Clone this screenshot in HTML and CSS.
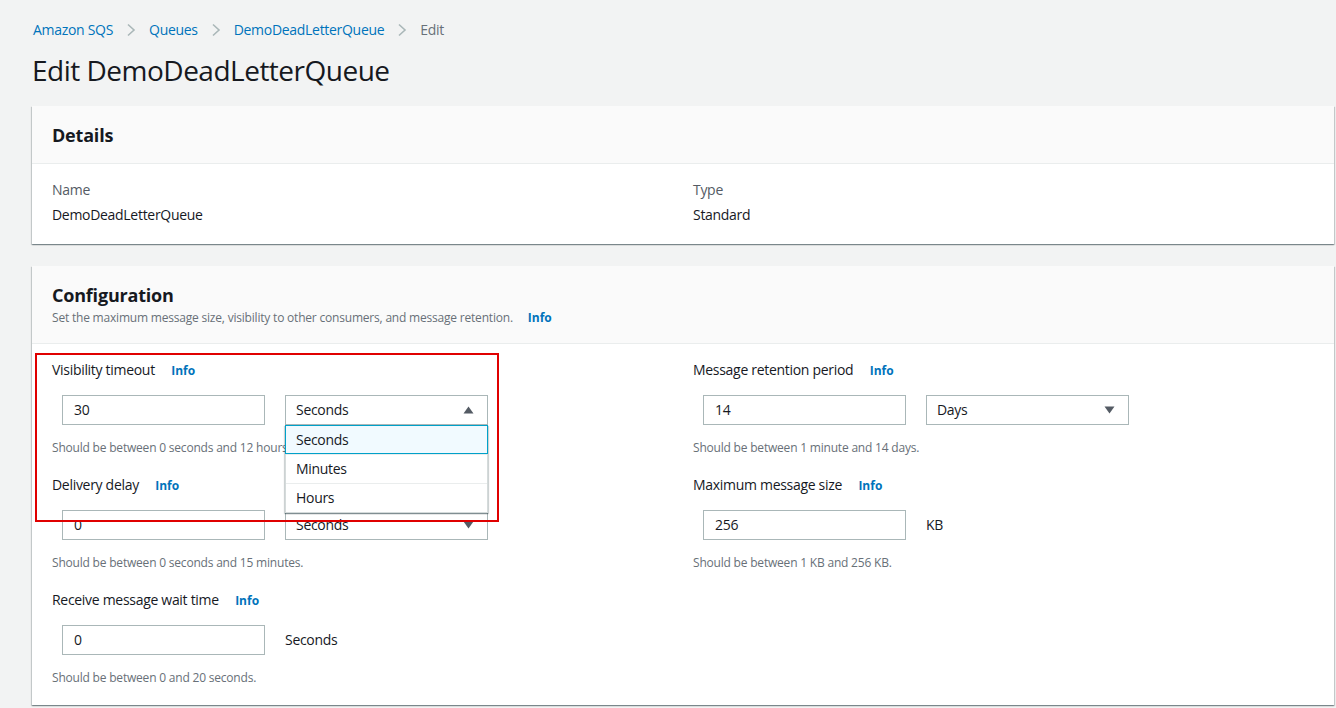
FILE: index.html
```html
<!DOCTYPE html>
<html lang="en">
<head>
<meta charset="utf-8">
<title>Edit DemoDeadLetterQueue</title>
<link rel="stylesheet" href="styles.css">
</head>
<body>
<div class="page">
  <nav class="crumbs">
    <a class="crumb-link">Amazon SQS</a>
    <svg class="chev" width="10" height="14" viewBox="0 0 10 14"><path d="M2 1.5 L8 7 L2 12.5" fill="none" stroke="#aab7b8" stroke-width="1.6"/></svg>
    <a class="crumb-link">Queues</a>
    <svg class="chev" width="10" height="14" viewBox="0 0 10 14"><path d="M2 1.5 L8 7 L2 12.5" fill="none" stroke="#aab7b8" stroke-width="1.6"/></svg>
    <a class="crumb-link">DemoDeadLetterQueue</a>
    <svg class="chev" width="10" height="14" viewBox="0 0 10 14"><path d="M2 1.5 L8 7 L2 12.5" fill="none" stroke="#aab7b8" stroke-width="1.6"/></svg>
    <span class="crumb-current">Edit</span>
  </nav>
  <h1 class="title">Edit DemoDeadLetterQueue</h1>

  <section class="panel">
    <header class="panel-head">
      <h2 class="panel-title">Details</h2>
    </header>
    <div class="panel-body details-body">
      <div class="kv">
        <div class="kv-label">Name</div>
        <div class="kv-value">DemoDeadLetterQueue</div>
      </div>
      <div class="kv">
        <div class="kv-label">Type</div>
        <div class="kv-value">Standard</div>
      </div>
    </div>
  </section>

  <section class="panel config">
    <header class="panel-head config-head">
      <h2 class="panel-title">Configuration</h2>
      <p class="panel-desc">Set the maximum message size, visibility to other consumers, and message retention. <a class="info">Info</a></p>
    </header>
    <div class="panel-body config-body">
      <div class="col">
        <div class="field">
          <div class="label">Visibility timeout <a class="info">Info</a></div>
          <div class="controls">
            <div class="input">30</div>
            <div class="select-wrap">
              <div class="select open">Seconds<svg class="caret" width="11" height="8" viewBox="0 0 11 8"><path d="M0.5 7.5 L5.5 0.5 L10.5 7.5 Z" fill="#545b64"/></svg></div>
              <ul class="menu">
                <li class="opt selected">Seconds</li>
                <li class="opt">Minutes</li>
                <li class="opt">Hours</li>
              </ul>
            </div>
          </div>
          <div class="hint">Should be between 0 seconds and 12 hours.</div>
        </div>
        <div class="field">
          <div class="label">Delivery delay <a class="info">Info</a></div>
          <div class="controls">
            <div class="input">0</div>
            <div class="select-wrap">
              <div class="select">Seconds<svg class="caret" width="11" height="8" viewBox="0 0 11 8"><path d="M0.5 0.5 L10.5 0.5 L5.5 7.5 Z" fill="#545b64"/></svg></div>
            </div>
          </div>
          <div class="hint">Should be between 0 seconds and 15 minutes.</div>
        </div>
        <div class="field">
          <div class="label">Receive message wait time <a class="info">Info</a></div>
          <div class="controls">
            <div class="input">0</div>
            <div class="unit">Seconds</div>
          </div>
          <div class="hint">Should be between 0 and 20 seconds.</div>
        </div>
      </div>
      <div class="col">
        <div class="field">
          <div class="label">Message retention period <a class="info">Info</a></div>
          <div class="controls">
            <div class="input">14</div>
            <div class="select-wrap">
              <div class="select">Days<svg class="caret" width="11" height="8" viewBox="0 0 11 8"><path d="M0.5 0.5 L10.5 0.5 L5.5 7.5 Z" fill="#545b64"/></svg></div>
            </div>
          </div>
          <div class="hint">Should be between 1 minute and 14 days.</div>
        </div>
        <div class="field">
          <div class="label">Maximum message size <a class="info">Info</a></div>
          <div class="controls">
            <div class="input">256</div>
            <div class="unit">KB</div>
          </div>
          <div class="hint">Should be between 1 KB and 256 KB.</div>
        </div>
      </div>
      <div class="highlight"></div>
    </div>
  </section>
</div>
</body>
</html>
```

FILE: styles.css
```css
* { box-sizing: border-box; }
html, body { margin: 0; padding: 0; }
body {
  background: #f2f3f3;
  font-family: "Open Sans", "Noto Sans", "Liberation Sans", sans-serif;
  font-size: 14px;
  line-height: 20px;
  letter-spacing: -0.3px;
  color: #16191f;
  overflow: hidden;
}
.page {
  padding: 20px 2px 0 32px;
}
.crumbs {
  display: flex;
  align-items: center;
  gap: 13px;
  height: 20px;
  padding-left: 1px;
}
.crumb-link { color: #0073bb; text-decoration: none; }
.crumb-current { color: #687078; }
.chev { display: block; }
.title {
  margin: 12px 0 18px 0;
  font-size: 28px;
  line-height: 36px;
  font-weight: 400;
  letter-spacing: -0.5px;
  color: #16191f;
}
.panel {
  background: #fff;
  box-shadow: 0 1px 1px 0 rgba(0,28,36,.3), 1px 1px 1px 0 rgba(0,28,36,.15), -1px 1px 1px 0 rgba(0,28,36,.15);
  margin-bottom: 22px;
}
.panel-head {
  background: #fafafa;
  border-bottom: 1px solid #eaeded;
  padding: 18px 20px 17px 20px;
}
.config-head {
  padding-bottom: 17px;
}
.panel-title {
  margin: 0;
  font-size: 18px;
  line-height: 22px;
  font-weight: 700;
  letter-spacing: -0.2px;
}
.panel-desc {
  margin: 4px 0 0 0;
  font-size: 12px;
  line-height: 16px;
  color: #687078;
  letter-spacing: -0.2px;
}
.panel-desc .info { margin-left: 12px; }
.info {
  color: #0073bb;
  font-weight: 700;
  font-size: 12px;
  margin-left: 13px;
  letter-spacing: 0;
  text-decoration: none;
}
.details-body {
  display: grid;
  grid-template-columns: 1fr 1fr;
  column-gap: 20px;
  padding: 16px 20px 19px 20px;
}
.kv-label { color: #545b64; }
.kv-value { margin-top: 5px; }
.config-body {
  position: relative;
  display: grid;
  grid-template-columns: 1fr 1fr;
  column-gap: 20px;
  padding: 16px 20px 0 20px;
}
.field { padding-bottom: 19px; }
.label { height: 20px; }
.controls {
  display: flex;
  gap: 20px;
  margin: 15px 0 15px 10px;
  height: 30px;
}
.input {
  width: 203px;
  height: 30px;
  border: 1px solid #aab7b8;
  padding: 4px 11px;
  background: #fff;
}
.select-wrap {
  position: relative;
  width: 203px;
}
.select {
  height: 30px;
  border: 1px solid #aab7b8;
  padding: 4px 13px 4px 10px;
  display: flex;
  align-items: center;
  justify-content: space-between;
  background: #fff;
}
.caret { display: block; }
.unit {
  line-height: 30px;
}
.menu {
  position: absolute;
  top: 30px;
  left: 0;
  width: 203px;
  margin: 0;
  padding: 0;
  list-style: none;
  background: #fff;
  border: 1px solid #d5dbdb;
  border-top: none;
  box-shadow: 0 1px 1px 0 rgba(0,28,36,.3), 1px 1px 1px 0 rgba(0,28,36,.15), -1px 1px 1px 0 rgba(0,28,36,.15);
  z-index: 2;
}
.opt {
  height: 29px;
  padding: 4px 10px;
  border-top: 1px solid #eaeded;
}
.opt:first-child { border-top: none; }
.opt.selected {
  background: #f1faff;
  border: 1px solid #00a1c9;
  margin: 0 -1px;
  padding: 4px 10px;
}
.hint {
  font-size: 12px;
  line-height: 16px;
  color: #687078;
  letter-spacing: -0.2px;
}
.highlight {
  position: absolute;
  left: 3px;
  top: 9px;
  width: 464px;
  height: 169px;
  border: 2px solid #e00000;
  z-index: 3;
  pointer-events: none;
}
```
